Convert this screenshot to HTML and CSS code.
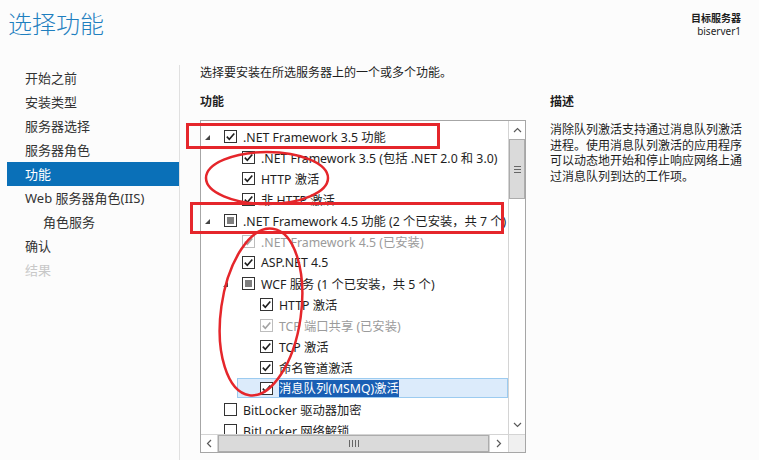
FILE: index.html
```html
<!DOCTYPE html>
<html lang="zh-CN">
<head>
  <meta charset="UTF-8" />
  <title>添加角色和功能向导 - 选择功能</title>
  <link rel="stylesheet" href="styles.css">
</head>
<body>
  <svg class="defs" width="0" height="0">
    <symbol id="chk" viewBox="0 0 11 11">
      <path d="M1.8 5.6 L4.3 8.2 L9.3 2.4" fill="none" stroke-width="1.6"/>
    </symbol>
    <symbol id="exp" viewBox="0 0 7 7">
      <path d="M6 1 L6 6 L1 6 Z"/>
    </symbol>
  </svg>

  <header class="top">
    <h1 class="title">选择功能</h1>
    <div class="target">
      <div class="target-label">目标服务器</div>
      <div>biserver1</div>
    </div>
  </header>

  <div class="main">
    <nav class="steps">
      <div class="step">开始之前</div>
      <div class="step">安装类型</div>
      <div class="step">服务器选择</div>
      <div class="step">服务器角色</div>
      <div class="step active">功能</div>
      <div class="step">Web 服务器角色(IIS)</div>
      <div class="step sub">角色服务</div>
      <div class="step">确认</div>
      <div class="step off">结果</div>
    </nav>

    <section class="content">
      <p class="intro">选择要安装在所选服务器上的一个或多个功能。</p>

      <div class="columns">
        <div class="features">
          <h2 class="col-title">功能</h2>
          <div class="tree-box">
            <div class="tree">
              <div class="row lv0"><span class="exp"><svg><use href="#exp"/></svg></span><span class="cb"><svg><use href="#chk"/></svg></span><span class="txt">.NET Framework 3.5 功能</span></div>
              <div class="row lv1"><span class="exp"></span><span class="cb"><svg><use href="#chk"/></svg></span><span class="txt">.NET Framework 3.5 (包括 .NET 2.0 和 3.0)</span></div>
              <div class="row lv1"><span class="exp"></span><span class="cb"><svg><use href="#chk"/></svg></span><span class="txt">HTTP 激活</span></div>
              <div class="row lv1"><span class="exp"></span><span class="cb"><svg><use href="#chk"/></svg></span><span class="txt">非 HTTP 激活</span></div>
              <div class="row lv0"><span class="exp"><svg><use href="#exp"/></svg></span><span class="cb part"></span><span class="txt">.NET Framework 4.5 功能 (2 个已安装，共 7 个)</span></div>
              <div class="row lv1 installed"><span class="exp"></span><span class="cb"><svg><use href="#chk"/></svg></span><span class="txt">.NET Framework 4.5 (已安装)</span></div>
              <div class="row lv1"><span class="exp"></span><span class="cb"><svg><use href="#chk"/></svg></span><span class="txt">ASP.NET 4.5</span></div>
              <div class="row lv1"><span class="exp"><svg><use href="#exp"/></svg></span><span class="cb part"></span><span class="txt">WCF 服务 (1 个已安装，共 5 个)</span></div>
              <div class="row lv2"><span class="exp"></span><span class="cb"><svg><use href="#chk"/></svg></span><span class="txt">HTTP 激活</span></div>
              <div class="row lv2 installed"><span class="exp"></span><span class="cb"><svg><use href="#chk"/></svg></span><span class="txt">TCP 端口共享 (已安装)</span></div>
              <div class="row lv2"><span class="exp"></span><span class="cb"><svg><use href="#chk"/></svg></span><span class="txt">TCP 激活</span></div>
              <div class="row lv2"><span class="exp"></span><span class="cb"><svg><use href="#chk"/></svg></span><span class="txt">命名管道激活</span></div>
              <div class="row lv2 selected"><span class="exp"></span><span class="cb"><svg><use href="#chk"/></svg></span><span class="txt"><span class="hl">消息队列(MSMQ)激活</span></span></div>
              <div class="row lv0"><span class="exp"></span><span class="cb"></span><span class="txt">BitLocker 驱动器加密</span></div>
              <div class="row lv0"><span class="exp"></span><span class="cb"></span><span class="txt">BitLocker 网络解锁</span></div>
            </div>

            <div class="vscroll">
              <div class="sbtn">
                <svg width="9" height="6" viewBox="0 0 9 6"><path d="M1 5 L4.5 1.5 L8 5" /></svg>
              </div>
              <div class="vthumb"><span></span><span></span><span></span></div>
              <div class="vtrack"></div>
              <div class="sbtn">
                <svg width="9" height="6" viewBox="0 0 9 6"><path d="M1 1 L4.5 4.5 L8 1" /></svg>
              </div>
            </div>

            <div class="hscroll">
              <div class="sbtn">
                <svg width="6" height="9" viewBox="0 0 6 9"><path d="M5 1 L1.5 4.5 L5 8" /></svg>
              </div>
              <div class="hthumb"><span></span><span></span><span></span><span></span></div>
              <div class="sbtn">
                <svg width="6" height="9" viewBox="0 0 6 9"><path d="M1 1 L4.5 4.5 L1 8" /></svg>
              </div>
            </div>

            <div class="corner"></div>
          </div>
        </div>

        <div class="desc">
          <h2 class="col-title">描述</h2>
          <p class="desc-text">消除队列激活支持通过消息队列激活进程。使用消息队列激活的应用程序可以动态地开始和停止响应网络上通过消息队列到达的工作项。</p>
        </div>
      </div>
    </section>
  </div>

  <!-- 手画的红色标注 -->
  <svg class="marks" width="759" height="460" viewBox="0 0 759 460">
    <rect x="187.5" y="124.5" width="251" height="23" />
    <rect x="191.5" y="203.5" width="311" height="29" />
    <ellipse cx="267" cy="178" rx="61" ry="26" />
    <ellipse cx="261" cy="312" rx="40" ry="84" transform="rotate(8 261 312)" />
  </svg>
</body>
</html>
```

FILE: styles.css
```css
body {
  margin: 0;
  width: 759px;
  height: 460px;
  overflow: hidden;
  position: relative;
  background: #fcfcfc;
  color: #1e1e1e;
  font-family: "Noto Sans", "Noto Sans CJK SC", sans-serif;
  font-size: 12px;
}

.defs {
  position: absolute;
}

/* 顶部 */
.top {
  height: 65px;
  display: flex;
  justify-content: space-between;
  align-items: flex-start;
  box-sizing: border-box;
  padding: 8px 18px 0 8px;
}

.title {
  margin: 0;
  font-size: 24px;
  line-height: 32px;
  font-weight: 300;
  color: #1f7fbf;
}

.target {
  padding-top: 4px;
  text-align: right;
  font-size: 10px;
  line-height: 13px;
}

.target-label {
  font-weight: bold;
}

/* 主体 */
.main {
  display: flex;
  height: 395px;
}

.steps {
  width: 172px;
  margin-left: 7px;
  padding-top: 1px;
  border-right: 1px solid #e0e0e0;
}

.step {
  height: 24px;
  line-height: 24px;
  padding-left: 18px;
  font-size: 13px;
  color: #333;
}

.step.sub {
  padding-left: 36px;
}

.step.active {
  background: #0a70b8;
  color: #fff;
}

.step.off {
  color: #c8c8c8;
}

.content {
  padding-left: 20px;
}

.intro {
  margin: 0;
  line-height: 16px;
}

.columns {
  display: flex;
  gap: 24px;
  margin-top: 13px;
}

.col-title {
  margin: 0;
  font-size: 12px;
  line-height: 16px;
  font-weight: bold;
}

/* 树形列表 */
.tree-box {
  margin-top: 10px;
  width: 326px;
  height: 333px;
  box-sizing: border-box;
  border: 1px solid #a6a6a6;
  background: #fff;
  display: grid;
  grid-template-columns: 307px 17px;
  grid-template-rows: 313px 18px;
}

.tree {
  overflow: hidden;
  padding-top: 5px;
  white-space: nowrap;
}

.row {
  height: 21px;
  display: flex;
  align-items: center;
  box-sizing: border-box;
}

.row.lv0 { padding-left: 2px; }
.row.lv1 { padding-left: 20px; }
.row.lv2 { padding-left: 38px; }

.row.selected {
  margin-left: 36px;
  padding-left: 1px;
  height: 20px;
  margin-bottom: 1px;
  border: 1px solid #9ccbf0;
  background: #dcebfb;
}

.exp {
  width: 21px;
  height: 13px;
  flex: none;
}

.exp svg {
  width: 7px;
  height: 7px;
  margin: 4px 0 0 1px;
  display: block;
  fill: #444;
}

.cb {
  width: 13px;
  height: 13px;
  box-sizing: border-box;
  border: 1px solid #333;
  background: #fff;
  flex: none;
  position: relative;
}

.cb svg {
  display: block;
  width: 11px;
  height: 11px;
  stroke: #1e1e1e;
}

.cb.part::after {
  content: "";
  position: absolute;
  left: 2px;
  top: 2px;
  width: 7px;
  height: 7px;
  background: #7f7f7f;
}

.txt {
  margin-left: 6px;
  font-size: 12.3px;
}

.installed .cb {
  border-color: #bdbdbd;
}

.installed .cb svg {
  stroke: #a3a3a3;
}

.installed .txt {
  color: #9b9b9b;
}

.hl {
  background: #1a5fb4;
  color: #fff;
}

/* 滚动条 */
.vscroll {
  display: flex;
  flex-direction: column;
  border-left: 1px solid #d4d4d4;
  background: #fff;
}

.sbtn {
  width: 16px;
  height: 18px;
  display: flex;
  align-items: center;
  justify-content: center;
  flex: none;
  box-sizing: border-box;
}

.sbtn svg {
  fill: none;
  stroke: #5a5a5a;
  stroke-width: 1.2;
}

.vthumb {
  height: 60px;
  box-sizing: border-box;
  border: 1px solid #acacac;
  background: #dadada;
  display: flex;
  flex-direction: column;
  align-items: center;
  justify-content: center;
  gap: 2px;
}

.vthumb span {
  width: 7px;
  height: 1px;
  background: #666;
}

.vtrack {
  flex: 1;
}

.hscroll {
  display: flex;
  border-top: 1px solid #d4d4d4;
  background: #fff;
}

.hscroll .sbtn {
  width: 17px;
  height: 17px;
  border-right: 1px solid #d4d4d4;
}

.hscroll .sbtn:last-child {
  width: 19px;
  border-right: none;
  border-left: 1px solid #d4d4d4;
}

.hthumb {
  flex: 1;
  box-sizing: border-box;
  border: 1px solid #acacac;
  background: #dadada;
  display: flex;
  align-items: center;
  justify-content: center;
  gap: 2px;
}

.hthumb span {
  width: 1px;
  height: 7px;
  background: #666;
}

.corner {
  background: #f0f0f0;
  border-top: 1px solid #d4d4d4;
  border-left: 1px solid #d4d4d4;
}

/* 描述 */
.desc {
  width: 195px;
}

.desc-text {
  margin: 12px 0 0;
  line-height: 15.5px;
}

/* 红色标注 */
.marks {
  position: absolute;
  left: 0;
  top: 0;
  pointer-events: none;
}

.marks rect,
.marks ellipse {
  fill: none;
  stroke: #e5262b;
  stroke-width: 3;
}

.marks ellipse {
  stroke-width: 2.5;
}
```
